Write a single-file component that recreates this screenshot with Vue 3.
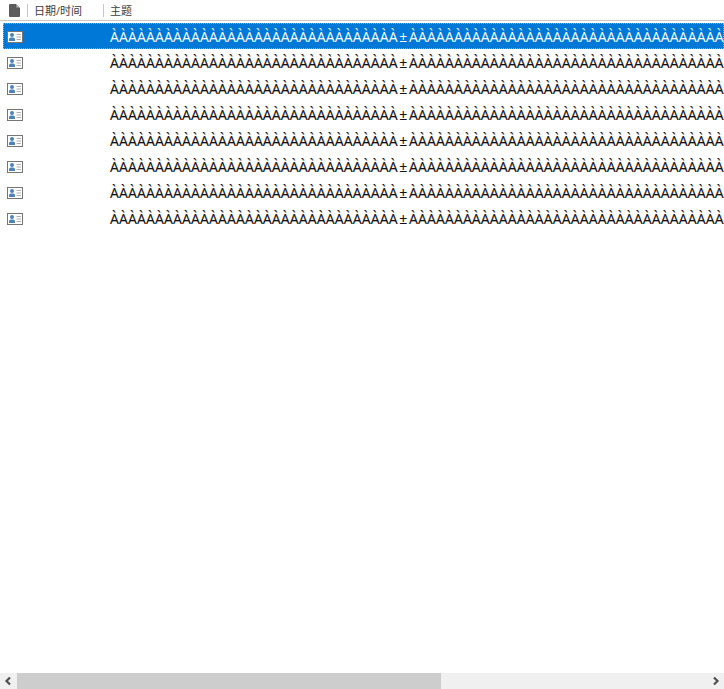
<script setup>
const head = 'À'.repeat(32)
const tail = 'À'.repeat(35)
const rows = Array.from({ length: 8 }, (_, i) => ({ id: i, selected: i === 0 }))
</script>

<template>
  <div class="mail-list">
    <div class="header">
      <div class="col-icon">
        <svg width="11" height="13" viewBox="0 0 11 13">
          <path d="M1 0H7L11 4V12Q11 13 10 13H1Q0 13 0 12V1Q0 0 1 0Z" fill="#5c5c5c" />
          <path d="M7.4 0.4V3.6H10.6Z" fill="#b4b4b4" />
        </svg>
      </div>
      <div class="col-date">日期/时间</div>
      <div class="col-subject">主题</div>
    </div>

    <div class="rows">
      <div v-for="row in rows" :key="row.id" class="row" :class="{ selected: row.selected }">
        <div class="row-icon">
          <svg width="16" height="12" viewBox="0 0 16 12">
            <rect x="0.5" y="0.5" width="15" height="11" fill="#fff" stroke="#767676" />
            <circle cx="5" cy="4" r="2" fill="#4a82bc" />
            <path d="M2 10V8.2C2 7 3 6.5 5 6.5S8 7 8 8.2V10Z" fill="#4a82bc" />
            <path d="M9.5 3.5H14M9.5 6H14M9.5 8.5H14" stroke="#b0b0b0" />
          </svg>
        </div>
        <div class="row-subject">{{ head }}<span class="sep">±</span>{{ tail }}</div>
      </div>
    </div>

    <div class="scrollbar">
      <svg class="arrow" width="17" height="16" viewBox="0 0 17 16">
        <path d="M10 4.5L6.5 8L10 11.5" fill="none" stroke="#505050" stroke-width="2.2" />
      </svg>
      <div class="track"><div class="thumb"></div></div>
      <svg class="arrow" width="17" height="16" viewBox="0 0 17 16">
        <path d="M7 4.5L10.5 8L7 11.5" fill="none" stroke="#505050" stroke-width="2.2" />
      </svg>
    </div>
  </div>
</template>

<style>
html,
body {
  margin: 0;
  background: #fff;
}
</style>

<style scoped>
.mail-list {
  width: 724px;
  height: 689px;
  display: flex;
  flex-direction: column;
  overflow: hidden;
  background: #fff;
  font-family: 'Open Sans', 'Noto Sans CJK SC', sans-serif;
}

.header {
  height: 21px;
  flex: none;
  display: flex;
  align-items: center;
  box-sizing: border-box;
  border-bottom: 1px solid #c8c8c8;
  font-size: 11px;
  line-height: 13px;
  color: #3c3c3c;
}

.col-icon {
  width: 28px;
  height: 13px;
  box-sizing: border-box;
  padding-left: 9px;
  border-right: 1px solid #c8c8c8;
  display: flex;
  align-items: center;
}

.col-date {
  width: 76px;
  height: 13px;
  box-sizing: border-box;
  padding-left: 6px;
  border-right: 1px solid #c8c8c8;
}

.col-subject {
  height: 13px;
  padding-left: 6px;
}

.rows {
  flex: 1;
  padding: 2px 0 0 3px;
}

.row {
  height: 26px;
  padding-top: 2px;
  display: flex;
  align-items: center;
  box-sizing: border-box;
  color: #111;
  white-space: nowrap;
  overflow: hidden;
}

.row.selected {
  background: #0078d7;
  color: #fff;
  outline: 1px dotted #e8a040;
  outline-offset: -1px;
}

.row-icon {
  width: 107px;
  flex: none;
  padding-left: 4px;
  box-sizing: border-box;
  display: flex;
}

.row-subject {
  margin-bottom: 2px;
  font-size: 14px;
  letter-spacing: 0.14px;
  text-shadow: -0.3px 0 rgba(255, 140, 0, 0.35), 0.3px 0 rgba(0, 110, 255, 0.35);
}

.row.selected .row-subject {
  text-shadow: none;
}

.sep {
  margin: 0 1.5px;
}

.scrollbar {
  height: 16px;
  flex: none;
  display: flex;
  align-items: stretch;
  background: #f0f0f0;
}

.arrow {
  flex: none;
}

.track {
  flex: 1;
}

.thumb {
  width: 424px;
  height: 100%;
  background: #cdcdcd;
}
</style>
